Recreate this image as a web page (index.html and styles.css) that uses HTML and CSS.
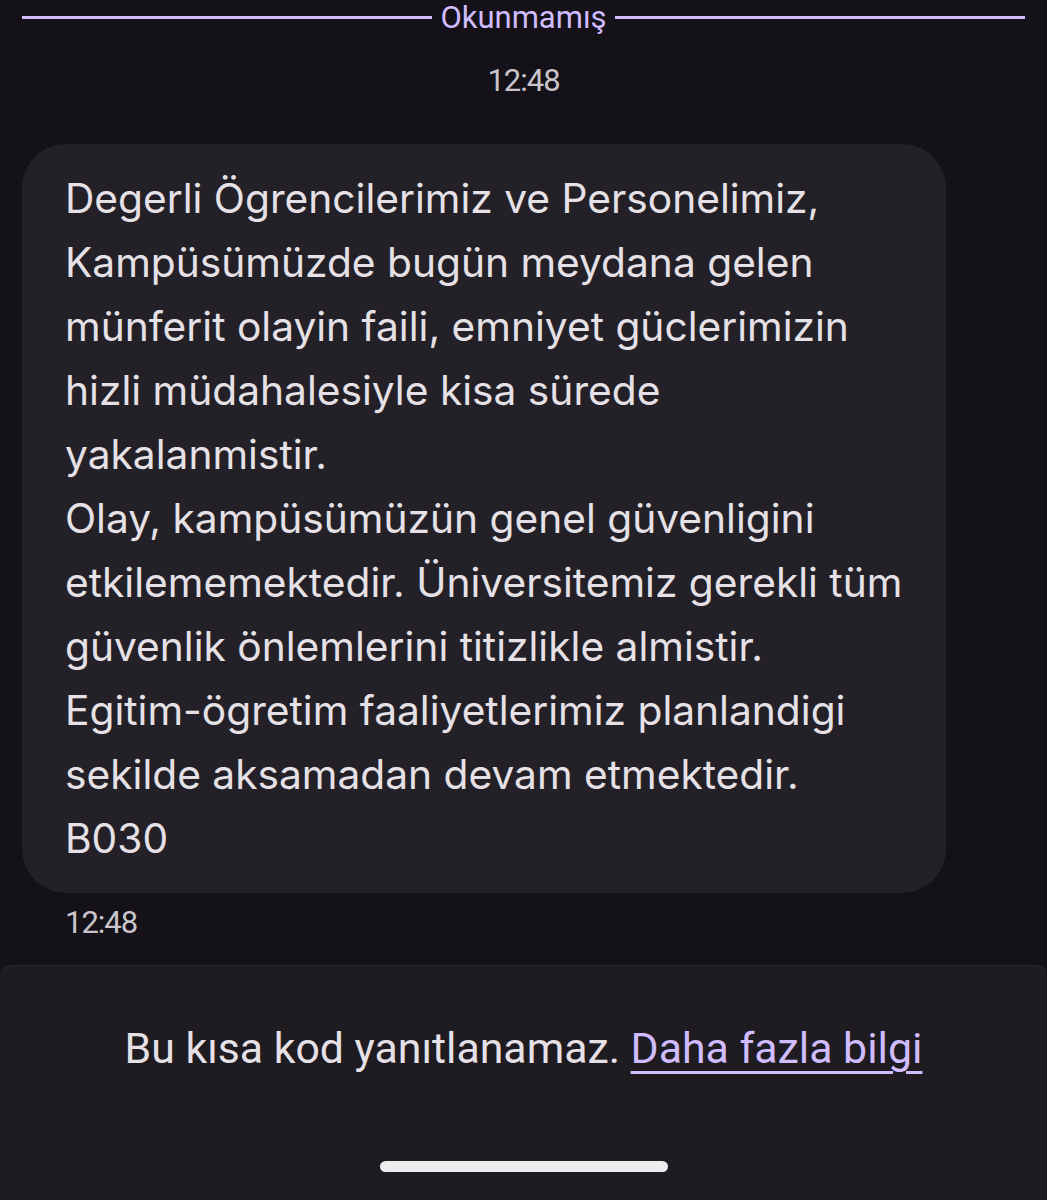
FILE: index.html
```html
<!DOCTYPE html>
<html lang="tr">
<head>
  <meta charset="UTF-8">
  <meta name="viewport" content="width=device-width, initial-scale=1.0">
  <title>Mesaj</title>
  <link rel="stylesheet" href="styles.css">
</head>
<body>

<div class="screen">
  <!-- Okunmamış ayırıcı -->
  <div class="unread-divider">
    <span class="line"></span>
    <span class="unread-label">Okunmamış</span>
    <span class="line"></span>
  </div>

  <div class="time-center">12:48</div>

  <!-- Mesaj balonu -->
  <div class="bubble">
    <p class="bubble-text">Degerli Ögrencilerimiz ve Personelimiz,<br>Kampüsümüzde bugün meydana gelen<br>münferit olayin faili, emniyet güclerimizin<br>hizli müdahalesiyle kisa sürede<br>yakalanmistir.<br>Olay, kampüsümüzün genel güvenligini<br>etkilememektedir. Üniversitemiz gerekli tüm<br>güvenlik önlemlerini titizlikle almistir.<br>Egitim-ögretim faaliyetlerimiz planlandigi<br>sekilde aksamadan devam etmektedir.<br>B030</p>
  </div>
  <div class="time-left">12:48</div>

  <!-- Alt panel -->
  <div class="bottom-sheet">
    <p class="notice">Bu kısa kod yanıtlanamaz. <a href="#" class="notice-link">Daha fazla bilgi</a></p>
    <div class="home-bar"></div>
  </div>
</div>

</body>
</html>
```

FILE: styles.css
```css
body {
  margin: 0;
  background-color: #141218;
  font-family: "Inter", "Open Sans", sans-serif;
  color: #e6e1e6;
}
.screen {
  width: 1047px;
  height: 1200px;
  display: flex;
  flex-direction: column;
  overflow: hidden;
}
.unread-divider {
  display: flex;
  align-items: center;
  gap: 8px;
  padding: 1px 22px 0 22px;
  height: 33px;
}
.line {
  flex: 1;
  height: 3px;
  background-color: #d0bcff;
}
.unread-label {
  font-family: "Roboto", sans-serif;
  font-size: 31px;
  color: #d0bcff;
  line-height: 36px;
}
.time-center {
  font-family: "Roboto", sans-serif;
  font-size: 31px;
  color: #c9c5ca;
  text-align: center;
  margin-top: 28px;
  letter-spacing: -1px;
}
.bubble {
  margin: 45px 0 0 22px;
  width: 924px;
  box-sizing: border-box;
  background-color: #232127;
  border-radius: 44px;
  padding: 23px 20px 22px 43px;
}
.bubble-text {
  margin: 0;
  font-size: 40.7px;
  line-height: 64px;
  color: #e6e1e6;
  white-space: nowrap;
}
.time-left {
  font-family: "Roboto", sans-serif;
  font-size: 31px;
  color: #c9c5ca;
  margin: 11px 0 0 65px;
  letter-spacing: -1px;
}
.bottom-sheet {
  margin-top: 24px;
  flex: 1;
  background-color: #1e1c21;
  border-top: 1px solid #27252b;
  border-radius: 10px 10px 0 0;
  display: flex;
  flex-direction: column;
  align-items: center;
}
.notice {
  margin: 57px 0 0 0;
  font-family: "Roboto", sans-serif;
  font-size: 42.8px;
  color: #e6e1e6;
}
.notice-link {
  color: #d0bcff;
  text-decoration: underline;
  text-decoration-thickness: 3px;
  text-underline-offset: 8px;
}
.home-bar {
  margin-top: 88px;
  width: 288px;
  height: 11px;
  border-radius: 6px;
  background-color: #eeecee;
}
```
